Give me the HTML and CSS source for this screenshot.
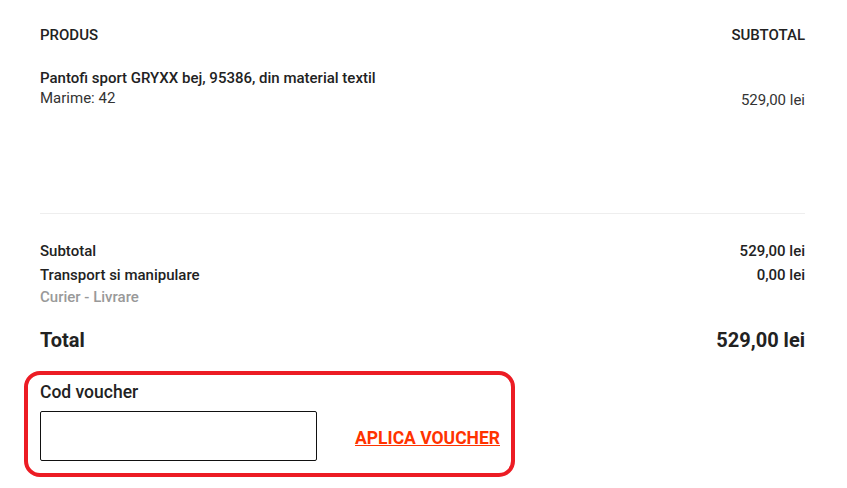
FILE: index.html
```html
<!DOCTYPE html>
<html lang="ro">
<head>
  <meta charset="UTF-8">
  <meta name="viewport" content="width=device-width, initial-scale=1.0">
  <title>Cos de cumparaturi</title>
  <link rel="stylesheet" href="styles.css">
</head>
<body>
  <div class="cart">
    <div class="row head">
      <span>Produs</span>
      <span>Subtotal</span>
    </div>

    <div class="row item">
      <div>
        <div class="item-name">Pantofi sport GRYXX bej, 95386, din material textil</div>
        <div class="item-meta">Marime: 42</div>
      </div>
      <div class="item-price">529,00 lei</div>
    </div>

    <div class="totals">
      <div class="row line">
        <span>Subtotal</span>
        <span>529,00 lei</span>
      </div>
      <div class="row line">
        <div>
          <div>Transport si manipulare</div>
          <div class="muted">Curier - Livrare</div>
        </div>
        <span>0,00 lei</span>
      </div>
      <div class="row total">
        <span>Total</span>
        <span>529,00 lei</span>
      </div>
    </div>

    <div class="voucher">
      <label for="voucher-code">Cod voucher</label>
      <div class="voucher-form">
        <input type="text" id="voucher-code">
        <a href="#" class="voucher-apply">APLICA VOUCHER</a>
      </div>
    </div>
  </div>
</body>
</html>
```

FILE: styles.css
```css
body {
  font-family: Roboto, "Liberation Sans", sans-serif;
  margin: 0;
  padding: 0;
  color: #222;
  background: #fff;
}
.cart {
  padding: 25px 42px 0 40px;
}
.row {
  display: flex;
  justify-content: space-between;
}
.head {
  font-size: 15px;
  line-height: 20px;
  font-weight: 500;
  text-transform: uppercase;
}
.item {
  margin-top: 23px;
  height: 145px;
  border-bottom: 1px solid #eee;
  font-size: 15px;
  line-height: 20px;
}
.item-name {
  font-weight: 500;
}
.item-meta {
  color: #333;
}
.item-price {
  padding-top: 22px;
  color: #333;
}
.totals {
  padding-top: 26px;
}
.line {
  font-size: 15px;
  line-height: 22px;
  font-weight: 500;
  margin-bottom: 2px;
}
.muted {
  color: #999;
}
.total {
  margin-top: 18px;
  font-size: 20px;
  line-height: 28px;
  font-weight: 700;
}
.voucher {
  margin: 17px 0 0 -16px;
  width: 460px;
  padding: 6px 11px 12px 12px;
  border: 4px solid #ec1c24;
  border-radius: 16px;
  box-sizing: content-box;
}
.voucher label {
  display: block;
  font-size: 17.5px;
  line-height: 22px;
  font-weight: 500;
}
.voucher-form {
  display: flex;
  align-items: center;
  justify-content: space-between;
  margin-top: 8px;
}
.voucher-form input {
  width: 277px;
  height: 50px;
  box-sizing: border-box;
  border: 1px solid #111;
  border-radius: 2px;
  padding: 0 10px;
  font-size: 16px;
}
.voucher-apply {
  margin-top: 4px;
  color: #ff3300;
  font-size: 17.5px;
  font-weight: 700;
  text-decoration: underline;
}
```
